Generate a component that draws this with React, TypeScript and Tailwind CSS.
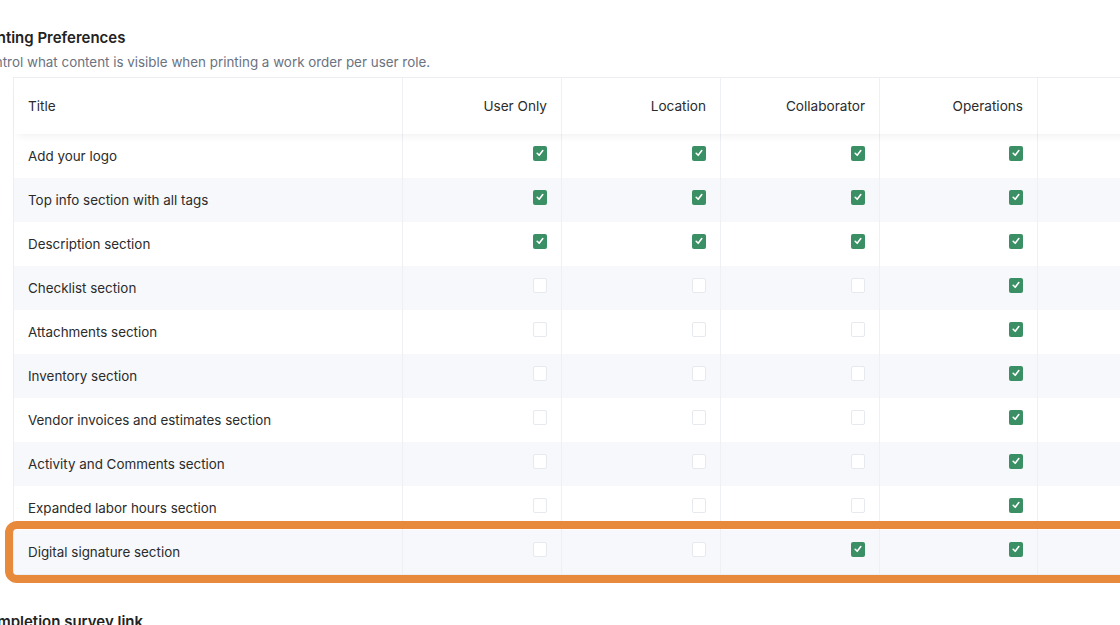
import React from "react";

const cols = ["User Only", "Location", "Collaborator", "Operations"];
const rows: [string, boolean[]][] = [
  ["Add your logo", [true, true, true, true]],
  ["Top info section with all tags", [true, true, true, true]],
  ["Description section", [true, true, true, true]],
  ["Checklist section", [false, false, false, true]],
  ["Attachments section", [false, false, false, true]],
  ["Inventory section", [false, false, false, true]],
  ["Vendor invoices and estimates section", [false, false, false, true]],
  ["Activity and Comments section", [false, false, false, true]],
  ["Expanded labor hours section", [false, false, false, true]],
  ["Digital signature section", [false, false, true, true]],
];

const grid = "grid grid-cols-[389px_159px_159px_159px_158px_1fr]";

function Box({ on }: { on: boolean }) {
  if (on)
    return (
      <span className="mb-[6px] flex h-[15px] w-[14px] items-center justify-center rounded-[2px] bg-[#3b8f64]">
        <svg width="10" height="10" viewBox="0 0 10 10" fill="none">
          <path d="M2.2 5.3 L4.2 7.3 L7.8 2.6" stroke="white" strokeWidth="1.6" strokeLinecap="round" strokeLinejoin="round" />
        </svg>
      </span>
    );
  return <span className="mb-[6px] block h-[15px] w-[14px] rounded-[2px] border border-[#e6e9ee] bg-white" />;
}

export default function App() {
  return (
    <div className="h-[625px] w-[1120px] overflow-hidden bg-white font-['Inter',sans-serif] text-[#2b2b2b]">
      <div className="ml-[-23px] pt-[28px]">
        <h2 className="text-[15px] font-semibold leading-[20px] text-[#222]">Printing Preferences</h2>
        <p className="mt-[6px] text-[13.4px] leading-[16px] text-[#6b7280]">
          Control what content is visible when printing a work order per user role.
        </p>
      </div>
      <div className="ml-[13px] mt-[7px] w-[1200px] border border-[#eceef1] bg-white">
        <div className={`${grid} relative z-10 h-[56px] bg-white text-[13.6px] shadow-[0_6px_8px_-4px_rgba(0,0,0,0.06)]`}>
          <div className="flex items-center border-r border-[#eef0f3] pl-[14px]">Title</div>
          {cols.map((c) => (
            <div key={c} className="flex items-center justify-end border-r border-[#eef0f3] pr-[14px]">
              {c}
            </div>
          ))}
          <div />
        </div>
        {rows.map(([t, v], i) => (
          <div
            key={t}
            className={`${grid} relative h-[44px] text-[13.4px] ${i % 2 === 1 ? "bg-[#f6f8fb]" : "bg-white"}`}
          >
            <div className="flex items-center border-r border-[#eef0f3] pl-[14px]">{t}</div>
            {v.map((on, j) => (
              <div key={j} className="flex items-center justify-end border-r border-[#eef0f3] pr-[14px]">
                <Box on={on} />
              </div>
            ))}
            <div />
            {i === rows.length - 1 && (
              <div className="pointer-events-none absolute bottom-[-9px] left-[-9px] right-[-20px] top-[-9px] rounded-[12px] border-[8px] border-[#e88a3c]" />
            )}
          </div>
        ))}
      </div>
      <div className="ml-[-23px] mt-[37px]">
        <h2 className="text-[15px] font-semibold leading-[20px] text-[#222]">Completion survey link</h2>
      </div>
    </div>
  );
}
